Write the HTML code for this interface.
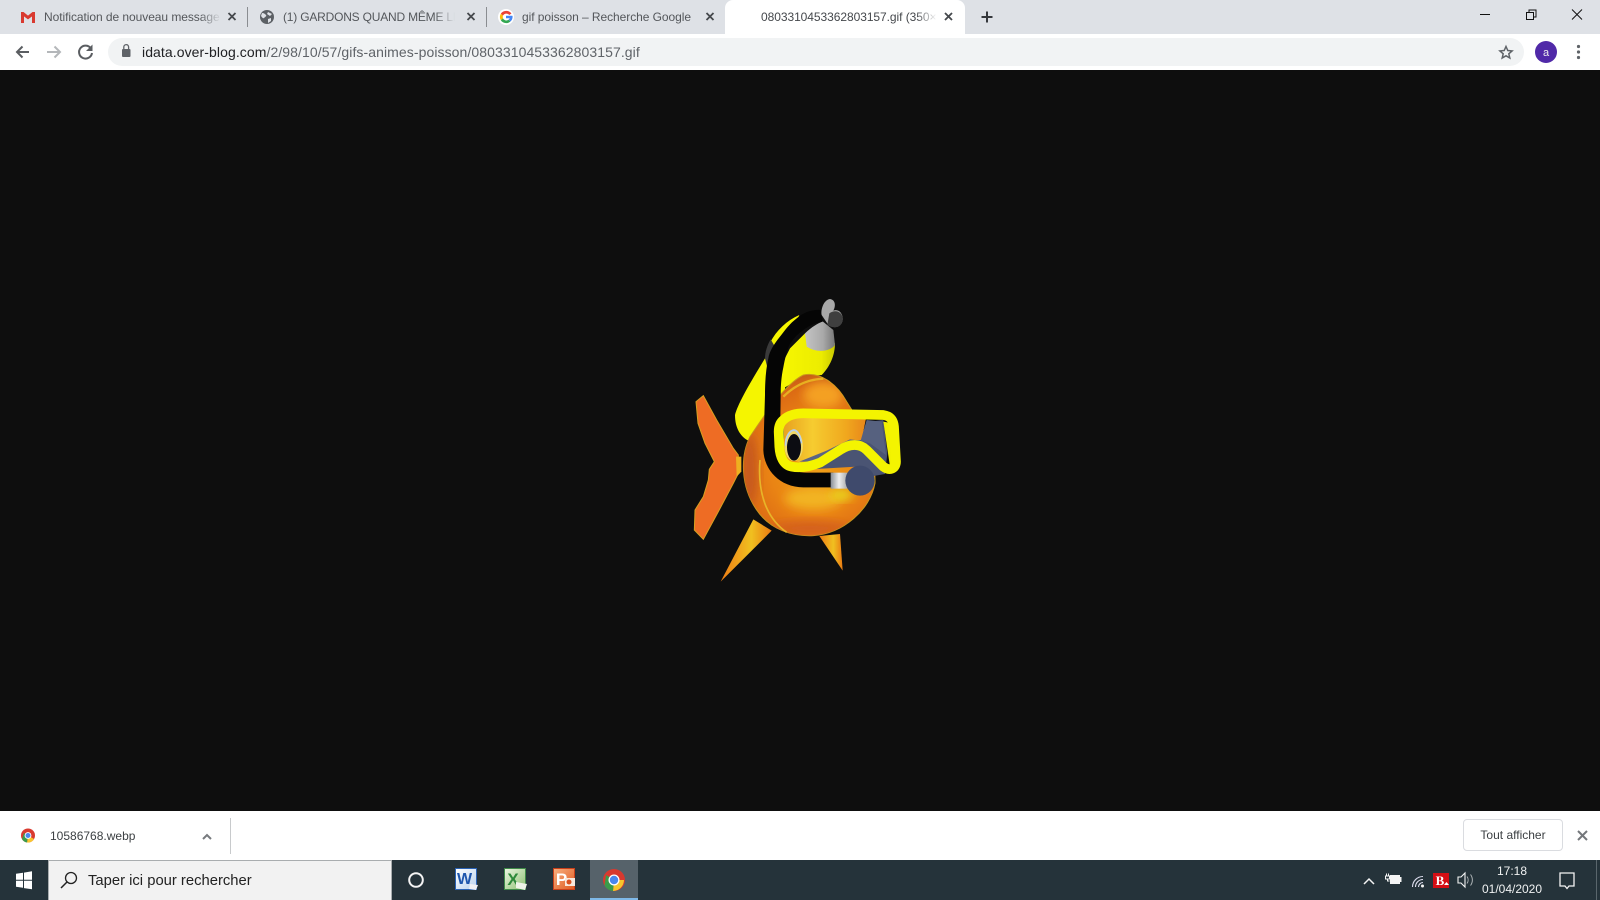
<!DOCTYPE html>
<html lang="fr"><head><meta charset="utf-8"><title>0803310453362803157.gif</title>
<style>
html,body{margin:0;padding:0;width:1600px;height:900px;overflow:hidden;background:#0e0e0e;font-family:"Liberation Sans",sans-serif}
.a{position:absolute}
#strip{left:0;top:0;width:1600px;height:34px;background:#dee1e6}
#tool{left:0;top:34px;width:1600px;height:36px;background:#fff}
#omni{left:108px;top:38px;width:1416px;height:28px;border-radius:14px;background:#f1f3f4}
#dl{left:0;top:811px;width:1600px;height:49px;background:#fff}
#task{left:0;top:860px;width:1600px;height:40px;background:#25333a}
.t{font-size:12px;letter-spacing:-.06px;line-height:16px;top:9px;color:#54575b;white-space:nowrap;overflow:hidden;-webkit-mask-image:linear-gradient(90deg,#000 88%,transparent 100%);mask-image:linear-gradient(90deg,#000 88%,transparent 100%)}
.sep{width:1px;height:20px;top:7px;background:#8a8d91}
svg{position:absolute;overflow:visible}
</style></head><body>
<div class="a" id="strip"></div><div class="a" id="tool"></div><div class="a" id="omni"></div>
<div class="a" style="left:725px;top:0;width:240px;height:34px;background:#fff;border-radius:8px 8px 0 0"></div>

<div class="a t" style="left:44px;width:177px">Notification de nouveau message</div>
<div class="a t" style="left:283px;width:172px;letter-spacing:-.2px">(1) GARDONS QUAND MÊME LE SOURIRE</div>
<div class="a t" style="left:522px;width:180px;-webkit-mask-image:none;mask-image:none">gif poisson – Recherche Google</div>
<div class="a t" style="left:761px;width:176px;color:#45484c">0803310453362803157.gif (350×350)</div>
<div class="a sep" style="left:247px"></div><div class="a sep" style="left:486px"></div>

<div class="a" style="left:142px;top:43px;font-size:14px;letter-spacing:.08px;line-height:18px;color:#202124;white-space:nowrap">idata.over-blog.com<span style="color:#5f6368">/2/98/10/57/gifs-animes-poisson/0803310453362803157.gif</span></div>

<div class="a" id="dl"></div>
<div class="a" style="left:50px;top:828px;font-size:12px;line-height:16px;color:#3c4043">10586768.webp</div>
<div class="a" style="left:230px;top:818px;width:1px;height:36px;background:#c8cacc"></div>
<div class="a" style="left:1463px;top:819px;width:98px;height:30px;border:1px solid #dadce0;border-radius:4px;background:#fff;font-size:12px;line-height:30px;text-align:center;color:#3c4043">Tout afficher</div>

<div class="a" id="task"></div>
<div class="a" style="left:48px;top:860px;width:344px;height:40px;background:#f2f2f2;box-sizing:border-box;border:1px solid #a9adaf;border-bottom:0"></div>
<div class="a" style="left:88px;top:872px;font-size:14.8px;line-height:18px;color:#222;white-space:nowrap">Taper ici pour rechercher</div>
<div class="a" style="left:590px;top:860px;width:48px;height:40px;background:#56626a"></div>
<div class="a" style="left:590px;top:898px;width:48px;height:2px;background:#7fb9e8"></div>
<div class="a" style="left:1478px;top:862px;width:68px;font-size:12px;line-height:18px;text-align:center;color:#f0f2f2">17:18<br>01/04/2020</div>

<svg class="a" style="left:0;top:0" width="1600" height="900" viewBox="0 0 1600 900">
<defs>
<radialGradient id="body" gradientUnits="userSpaceOnUse" cx="440" cy="560" r="280">
<stop offset="0" stop-color="#f0a018"/><stop offset=".5" stop-color="#ea8414"/><stop offset=".85" stop-color="#dc6a14"/><stop offset="1" stop-color="#c45c18"/></radialGradient>
<linearGradient id="lens" x1="0" y1="0" x2="1" y2="0"><stop offset="0" stop-color="#e8a020"/><stop offset=".35" stop-color="#f6cc30"/><stop offset=".75" stop-color="#f0a81e"/><stop offset="1" stop-color="#e8861a"/></linearGradient>
<linearGradient id="tank" x1="0" y1="0" x2="1" y2="0"><stop offset="0" stop-color="#f7f700"/><stop offset=".75" stop-color="#ecec00"/><stop offset="1" stop-color="#c9c900"/></linearGradient>
<linearGradient id="tgray" x1="0" y1="0" x2="1" y2="0"><stop offset="0" stop-color="#c4c4c4"/><stop offset=".6" stop-color="#a9a9a9"/><stop offset="1" stop-color="#777"/></linearGradient>
<linearGradient id="fin" x1="0" y1="0" x2="1" y2="0"><stop offset="0" stop-color="#ef7c14"/><stop offset=".6" stop-color="#f0c020"/><stop offset="1" stop-color="#ea7a12"/></linearGradient>
<linearGradient id="mouth" x1="0" y1="0" x2="1" y2="0"><stop offset="0" stop-color="#8a8f96"/><stop offset=".5" stop-color="#eee"/><stop offset="1" stop-color="#aaa"/></linearGradient>
<linearGradient id="wd" x1="0" y1="0" x2="1" y2="1"><stop offset="0" stop-color="#fff"/><stop offset="1" stop-color="#b8d0ee"/></linearGradient>
<linearGradient id="xl" x1="0" y1="0" x2="1" y2="1"><stop offset="0" stop-color="#eef6e4"/><stop offset="1" stop-color="#8cc070"/></linearGradient>
<linearGradient id="pp" x1="0" y1="0" x2="1" y2="1"><stop offset="0" stop-color="#f8b080"/><stop offset="1" stop-color="#e05a20"/></linearGradient>
<filter id="bl" x="-30%" y="-30%" width="160%" height="160%"><feGaussianBlur stdDeviation="14"/></filter>
<clipPath id="bc"><path d="M400 285C350 310 300 380 240 470 210 530 212 620 260 690 300 750 370 770 430 767 520 760 600 690 615 610 618 520 560 410 530 365 500 310 450 275 400 285Z"/></clipPath>
</defs>

<!-- Gmail -->
<path d="M21 23V12h2.500l4.500 3.600L32.500 12H35v11h-3v-6.500l-4 3-4-3V23z" fill="#d93a30"/><path d="M24 16.500l4 3 4-3V23h-8z" fill="#dee1e6"/>
<!-- close x -->
<g stroke="#45484c" stroke-width="1.800" fill="none"><path d="M228.500 13l7 7M235.500 13l-7 7"/><path d="M467.500 13l7 7M474.500 13l-7 7"/><path d="M706.500 13l7 7M713.500 13l-7 7"/><path d="M945 13l7 7M952 13l-7 7"/></g>
<!-- globe -->
<circle cx="267" cy="17" r="7" fill="#5c6065"/><path d="M262 13c2 0 3 1 4 2s-1 2-2 3-2-1-3-2zM268 12l4 2-2 2-3-2zM268 19l3-1 0 3-3 2z" fill="#dee1e6"/>
<!-- Google G -->
<circle cx="506" cy="17" r="8" fill="#fff"/>
<g transform="translate(1 0)">
<path d="M510.500 13.500A6.500 6.500 0 0 0 499.800 13.800l2.200 1.800A3.700 3.700 0 0 1 508.200 15z" fill="#ea4335"/>
<path d="M499.800 13.800a6.500 6.500 0 0 0 0 6.400l2.200-1.800a3.700 3.700 0 0 1 0-2.800z" fill="#fbbc05"/>
<path d="M499.800 20.200A6.500 6.500 0 0 0 509.500 21.500l-2-1.700a3.700 3.700 0 0 1-5.500-1.400z" fill="#34a853"/>
<path d="M509.500 21.500a6.500 6.500 0 0 0 2-5.700H505v2.500h3.700a3 3 0 0 1-1.200 1.500z" fill="#4285f4"/>
</g>
<!-- plus -->
<path d="M987 11.500v11M981.500 17h11" stroke="#35383c" stroke-width="2"/>
<!-- window -->
<path d="M1480 14.500h10" stroke="#111" stroke-width="1"/>
<path d="M1526.500 12.500h7v7h-7zM1529 12.500v-2.500h7v7h-2.500" fill="none" stroke="#111" stroke-width="1"/>
<path d="M1572 9.500l10 10M1582 9.500l-10 10" stroke="#111" stroke-width="1"/>
<!-- nav -->
<path d="M29 52H18M22.500 46.500L17 52l5.500 5.500" fill="none" stroke="#5a5d61" stroke-width="2"/>
<path d="M47 52h12M54.500 46.500L60 52l-5.500 5.500" fill="none" stroke="#b4b7ba" stroke-width="2"/>
<path d="M91 48.500A6.500 6.500 0 1 0 92 53" fill="none" stroke="#5a5d61" stroke-width="2"/><path d="M92.500 44.500v6.500H86z" fill="#5a5d61"/>
<!-- lock -->
<rect x="122" y="49" width="8.500" height="8" rx="1" fill="#5f6368"/><path d="M123.800 49v-2a2.400 2.400 0 0 1 4.800 0v2" fill="none" stroke="#5f6368" stroke-width="1.300"/>
<!-- star -->
<path d="M1506 46.500l1.800 4 4.300.4-3.300 2.900 1 4.200-3.800-2.200-3.800 2.200 1-4.200-3.300-2.900 4.300-.4z" fill="none" stroke="#5f6368" stroke-width="1.500"/>
<!-- avatar -->
<circle cx="1546" cy="52" r="11" fill="#5029a8"/><text x="1546" y="56" font-size="11" fill="#eee" text-anchor="middle" font-family="Liberation Sans">a</text>
<g fill="#5f6368"><circle cx="1578.500" cy="46.500" r="1.600"/><circle cx="1578.500" cy="52" r="1.600"/><circle cx="1578.500" cy="57.500" r="1.600"/></g>

<!-- fish -->
<g transform="translate(670 280) scale(.33333)">
<path d="M100 347L78 365 84 430 105 490 133 545 118 568 115 600 100 650 75 690 73 750 100 778 145 695 190 610 205 580 205 525 190 505 140 420Z" fill="#ee6c24" stroke="#d7a020" stroke-width="3"/>
<path d="M198 530L214 530 214 575 200 590Z" fill="#eeb020"/>
<path d="M250 718L152 905 305 752Z" fill="url(#fin)"/>
<path d="M448 768L518 872 510 762Z" fill="url(#fin)"/>
<!-- back tank -->
<path d="M388 105C350 122 320 150 300 188L285 235C255 285 205 365 195 405 195 445 212 470 235 482L345 330 345 220Z" fill="#f5f500"/>
<path d="M302 178C292 195 285 215 285 235L292 262 318 205Z" fill="#3a3a3a"/>
<!-- main tank -->
<path d="M360 205L405 160 495 190C495 225 480 260 455 285L400 290 340 325 332 260Z" fill="url(#tank)"/>
<path d="M405 160C425 140 445 130 458 124L490 150 495 195C480 215 440 220 410 200Z" fill="url(#tgray)"/>
<!-- body -->
<path d="M400 285C350 310 300 380 240 470 210 530 212 620 260 690 300 750 370 770 430 767 520 760 600 690 615 610 618 520 560 410 530 365 500 310 450 275 400 285Z" fill="url(#body)" stroke="#c8981c" stroke-width="3"/>
<g clip-path="url(#bc)">
<ellipse cx="460" cy="345" rx="60" ry="40" fill="#f4a020" filter="url(#bl)"/>
<ellipse cx="430" cy="655" rx="85" ry="32" fill="#f2b422" filter="url(#bl)"/>
<ellipse cx="515" cy="645" rx="34" ry="16" fill="#e8d81c" filter="url(#bl)"/>
<ellipse cx="240" cy="570" rx="26" ry="110" fill="#c85a1c" filter="url(#bl)"/>
<ellipse cx="420" cy="745" rx="120" ry="22" fill="#d4601a" filter="url(#bl)"/>
</g>
<path d="M270 540C262 640 290 715 350 757" fill="none" stroke="#e8b428" stroke-width="5"/>
<path d="M340 350C370 320 410 298 460 296" fill="none" stroke="#e8b020" stroke-width="7"/>
<!-- mask blue -->
<path d="M330 415L312 430 308 470 330 510 360 420ZM400 560L480 510 560 480 600 425 640 420 652 520 645 582 600 590 560 560 470 565 420 568Z" fill="#4a5473"/>
<path d="M340 420C355 405 380 400 400 400L590 405 575 480 540 480 470 518 390 548 345 530Z" fill="url(#lens)"/>
<path d="M590 420L635 425 648 525 600 490 572 482Z" fill="#56617f"/>
<path d="M388 545L470 512 540 478 572 482 530 495 450 545Z" fill="#5a6484"/>
<ellipse cx="371" cy="497" rx="28" ry="46" fill="#f0d868"/>
<path d="M347 497C347 465 360 452 372 450 385 452 392 470 394 490" fill="none" stroke="#b8d0ec" stroke-width="5"/>
<ellipse cx="372" cy="502" rx="21" ry="40" fill="#0c0c12"/>
<!-- snorkel -->
<path d="M452 90C425 88 400 98 380 115 360 130 345 150 330 170 310 195 298 215 295 235 287 270 285 310 285 345L280 510C282 570 330 622 400 622L490 622V578L410 578C360 578 330 550 330 500L332 345C332 310 335 285 340 262 345 235 350 215 358 195 370 175 385 160 400 150 420 135 440 128 458 125Z" fill="#050505"/>
<path d="M455 105C452 90 460 60 480 57 498 60 497 80 490 92 505 85 520 100 518 120 515 140 495 148 475 135Z" fill="#a8a8a8"/>
<path d="M478 100C500 85 520 100 518 120 515 142 495 148 472 135Z" fill="#3f3f3f"/>
<!-- frame -->
<path d="M640 425L680 432 690 550 660 560Z" fill="#f2f200"/>
<path d="M340 420C355 405 380 400 400 400L640 405C660 408 670 420 672 440L678 545C678 565 660 575 640 560L590 510C570 490 540 490 510 510L450 548C420 560 390 565 365 560 340 555 330 530 328 500L326 455C326 440 330 428 340 420Z" fill="none" stroke="#f4f400" stroke-width="29" stroke-linejoin="round"/>
<rect x="482" y="578" width="50" height="48" fill="url(#mouth)"/>
<ellipse cx="570" cy="602" rx="44" ry="45" fill="#3f4a6c"/>
</g>

<!-- download bar -->
<circle cx="28" cy="835.500" r="7" fill="#d93a30"/>
<path d="M28 835.500L34 839A7 7 0 0 1 27 842.500z" fill="#f9c530"/><path d="M28 835.500L27 842.500A7 7 0 0 1 22 839L24 833z" fill="#3a9c4c"/>
<circle cx="28" cy="835.500" r="3.400" fill="#fff"/><circle cx="28" cy="835.500" r="2.500" fill="#4a87ee"/>
<path d="M203 839l4-4 4 4" fill="none" stroke="#777a7e" stroke-width="2"/>
<path d="M1578 831l9 9M1587 831l-9 9" stroke="#74777b" stroke-width="2"/>

<!-- taskbar -->
<path d="M16 873.800l7-1v7h-7zM24 872.600l8-1.300v8.500h-8zM16 880.800h7v7l-7-1zM24 880.800h8v8.500l-8-1.200z" fill="#fff"/>
<circle cx="71" cy="878" r="5.500" fill="none" stroke="#222" stroke-width="1.300"/><path d="M67 882l-6 6" stroke="#222" stroke-width="1.500"/>
<circle cx="416" cy="880" r="6.800" fill="none" stroke="#f4f4f4" stroke-width="2"/>
<!-- word -->
<rect x="455.500" y="868.500" width="21" height="21" fill="url(#wd)" stroke="#2a62b4"/><text x="464.500" y="884" font-size="16" font-weight="700" fill="#1e56ae" text-anchor="middle" font-family="Liberation Sans">W</text><path d="M470 884l8 1-2 5-7-1z" fill="#f0f0f4"/>
<!-- excel -->
<rect x="504.500" y="868.500" width="21" height="21" fill="url(#xl)" stroke="#3f8a48"/><text x="513" y="885" font-size="17" font-weight="700" fill="#2e8a3a" text-anchor="middle" font-family="Liberation Sans">X</text><path d="M516 882l11 2-2 6-9-2z" fill="#eef4e8"/>
<!-- ppt -->
<rect x="553.500" y="868.500" width="21" height="21" fill="url(#pp)" stroke="#c8401a"/><text x="561.500" y="885" font-size="17" font-weight="700" fill="#fff" text-anchor="middle" font-family="Liberation Sans">P</text><path d="M565 878h10v8h-10z" fill="#f8e8dc"/><circle cx="569" cy="882" r="2.500" fill="#d9501e"/>
<!-- chrome -->
<circle cx="614" cy="880" r="11" fill="#d8392f"/>
<path d="M614 880L624 880A11 11 0 0 1 613 891z" fill="#f9c62c"/><path d="M614 880L613 891A11 11 0 0 1 604.500 885.500L606 875z" fill="#3b9b4a"/>
<circle cx="614" cy="880" r="5.500" fill="#fff"/><circle cx="614" cy="880" r="4.200" fill="#4a87ee"/>
<!-- tray -->
<path d="M1364 884l5-5 5 5" fill="none" stroke="#f4f4f4" stroke-width="1.500"/>
<path d="M1385.500 876h4v3h-4zM1386.500 873.500v2.500M1388.500 873.500v2.500M1387.500 879v2h2" fill="none" stroke="#f4f4f4"/>
<path d="M1390 875h10v9h-10z" fill="#f4f4f4"/><path d="M1400 877h1.500v5H1400z" fill="#f4f4f4"/>
<path d="M1412.500 887a10.500 10.500 0 0 1 10.500-10.500M1415.500 887a7.500 7.500 0 0 1 7.500-7.500M1418.500 887a4.500 4.500 0 0 1 4.500-4.500" fill="none" stroke="#dde" stroke-width="1.100"/><circle cx="1422.500" cy="886" r="1.500" fill="#f4f4f4"/>
<rect x="1433" y="873" width="16" height="15" fill="#d40e14"/><text x="1440" y="885" font-size="13" font-weight="700" fill="#fff" text-anchor="middle" font-family="Liberation Serif">B</text><path d="M1444 885l2.500-3 2.500 3z" fill="#fff"/>
<path d="M1458 877h3l4-4v14l-4-4h-3z" fill="none" stroke="#f4f4f4" stroke-width="1.100"/><path d="M1467 876.500a6 6 0 0 1 0 7M1470.500 874.500a9 9 0 0 1 0 11" fill="none" stroke="#aeb4b6"/>
<path d="M1560 873h14v13h-5l-2 2.500-2-2.500h-5z" fill="none" stroke="#f4f4f4" stroke-width="1.300"/>
<path d="M1596.500 860v40" stroke="#5a666c" stroke-width="1"/>
</svg>
</body></html>
